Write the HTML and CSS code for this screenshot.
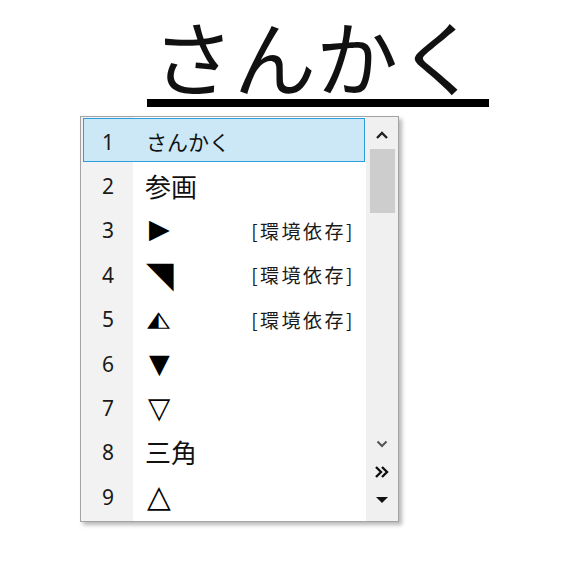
FILE: index.html
```html
<!DOCTYPE html>
<html lang="ja">
<head>
<meta charset="utf-8">
<link rel="stylesheet" href="styles.css">
</head>
<body>
<div class="page">
  <div class="compose">さんかく</div>
  <div class="cand">
    <div class="list">
      <div class="row sel"><span class="num">1</span><span class="word">さんかく</span></div>
      <div class="row"><span class="num">2</span><span class="word kanji">参画</span></div>
      <div class="row"><span class="num">3</span><span class="word"><span class="sym s-right">▶</span></span><span class="note">[環境依存]</span></div>
      <div class="row"><span class="num">4</span><span class="word"><span class="sym s-corner">◥</span></span><span class="note">[環境依存]</span></div>
      <div class="row"><span class="num">5</span><span class="word"><span class="sym s-half">◭</span></span><span class="note">[環境依存]</span></div>
      <div class="row"><span class="num">6</span><span class="word"><span class="sym s-down">▼</span></span></div>
      <div class="row"><span class="num">7</span><span class="word"><span class="sym s-odown">▽</span></span></div>
      <div class="row"><span class="num">8</span><span class="word kanji">三角</span></div>
      <div class="row"><span class="num">9</span><span class="word"><span class="sym s-oup">△</span></span></div>
    </div>
    <div class="scroll">
      <div class="up">
        <svg width="12" height="8" viewBox="0 0 12 8"><path d="M1 7 L6 2 L11 7" fill="none" stroke="#222" stroke-width="2.4"/></svg>
      </div>
      <div class="thumb"></div>
      <div class="spacer"></div>
      <div class="down">
        <svg width="12" height="8" viewBox="0 0 12 8"><path d="M1.5 1.5 L6 6 L10.5 1.5" fill="none" stroke="#555" stroke-width="2"/></svg>
      </div>
      <div class="more">
        <svg width="14" height="12" viewBox="0 0 14 12"><path d="M1 1 L6 6 L1 11 M7 1 L12 6 L7 11" fill="none" stroke="#111" stroke-width="2.4"/></svg>
      </div>
      <div class="end">
        <svg width="14" height="8" viewBox="0 0 14 8"><path d="M1 1 L13 1 L7 7 Z" fill="#111"/></svg>
      </div>
    </div>
  </div>
</div>
</body>
</html>
```

FILE: styles.css
```css
html, body {
  margin: 0;
  padding: 0;
  background: #fff;
}
.page {
  width: 580px;
  height: 563px;
  padding-top: 10px;
  box-sizing: border-box;
}
.compose {
  margin-left: 147px;
  width: 338px;
  padding-right: 4px;
  border-bottom: 8px solid #000;
  text-align: center;
  white-space: nowrap;
  font-family: "Noto Sans CJK JP", sans-serif;
  font-weight: 400;
  font-size: 82px;
  line-height: 89px;
  color: #111;
}
.cand {
  margin-left: 80px;
  margin-top: 9px;
  width: 319px;
  height: 406px;
  box-sizing: border-box;
  border: 1px solid #a3a3a3;
  background: #fff;
  box-shadow: 3px 3px 4px rgba(0, 0, 0, 0.28);
  display: flex;
}
.list {
  flex: 1;
  padding: 1px 1px 0 2px;
  background: linear-gradient(to right, #f2f2f2 0 52px, #fff 52px);
}
.row {
  height: 44.4px;
  box-sizing: border-box;
  padding-top: 3px;
  display: flex;
  align-items: center;
  font-family: "Noto Sans CJK JP", sans-serif;
  font-weight: 400;
  font-size: 21px;
  color: #111;
  border: 1px solid transparent;
}
.row.sel {
  background: #cce8f7;
  border-color: #2b9ede;
}
.num {
  width: 48px;
  text-align: center;
  font-family: "Noto Sans", "Open Sans", sans-serif;
  font-weight: 400;
  font-size: 21px;
  color: #1a1a1a;
}
.word {
  margin-left: 14px;
  flex: 1;
  line-height: 1;
}
.kanji {
  font-size: 26px;
  margin-left: 13px;
}
.sym {
  display: inline-block;
  font-family: "DejaVu Sans", sans-serif;
  font-weight: 400;
  color: #000;
  line-height: 1;
}
.s-right { font-size: 27px; margin-left: 3px; position: relative; top: -2px; }
.s-corner { font-size: 36px; margin-left: 0; }
.s-half { font-size: 30px; margin-left: 1px; transform: scaleY(0.72); }
.s-down { font-size: 27px; margin-left: 3px; }
.s-odown { font-size: 29px; margin-left: 2px; }
.s-oup { font-size: 31px; margin-left: 1px; }
.note {
  font-size: 19px;
  font-weight: 400;
  letter-spacing: 2.5px;
  margin-right: 9px;
  color: #1a1a1a;
}
.scroll {
  width: 32px;
  background: #f0f0f0;
  display: flex;
  flex-direction: column;
  align-items: center;
}
.up {
  height: 30px;
  display: flex;
  align-items: center;
  justify-content: center;
  padding-top: 6px;
  box-sizing: border-box;
}
.thumb {
  width: 25px;
  height: 64px;
  background: #cdcdcd;
  margin-top: 2px;
}
.spacer {
  flex: 1;
}
.down, .more, .end {
  height: 28px;
  display: flex;
  align-items: center;
  justify-content: center;
}
.end {
  margin-bottom: 7px;
}
```
